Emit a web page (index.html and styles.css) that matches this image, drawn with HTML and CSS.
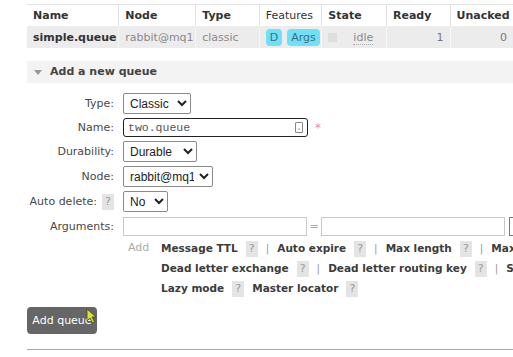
FILE: index.html
```
<!DOCTYPE html>
<html lang="en">
<head>
    <meta charset="UTF-8">
    <title>Queues</title>
    <link rel="stylesheet" href="styles.css">
</head>
<body>
    <div class="page">
        <table class="list">
            <thead>
                <tr>
                    <th class="c-name">Name</th>
                    <th class="c-node">Node</th>
                    <th class="c-type">Type</th>
                    <th class="c-feat plain">Features</th>
                    <th class="c-state">State</th>
                    <th class="c-num">Ready</th>
                    <th class="c-num">Unacked</th>
                    <th class="c-more"></th>
                </tr>
            </thead>
            <tbody>
                <tr>
                    <td class="qname">simple.queue</td>
                    <td class="dim">rabbit@mq1</td>
                    <td class="dim">classic</td>
                    <td><span class="tag">D</span><span class="tag">Args</span></td>
                    <td class="state"><span class="state-box"></span><span class="idle">idle</span></td>
                    <td class="num">1</td>
                    <td class="num">0</td>
                    <td></td>
                </tr>
            </tbody>
        </table>

        <div class="section">
            <h2 class="section-head"><span class="arrow"></span>Add a new queue</h2>

            <div class="form">
                <label class="lbl">Type:</label>
                <div><select class="sel sel-type"><option>Classic</option></select></div>

                <label class="lbl">Name:</label>
                <div class="row"><span class="name-input"><span class="mono">two.queue</span><span class="kbd-icon"></span></span><span class="req">*</span></div>

                <label class="lbl">Durability:</label>
                <div><select class="sel sel-dur"><option>Durable</option></select></div>

                <label class="lbl">Node:</label>
                <div><select class="sel sel-node"><option>rabbit@mq1</option></select></div>

                <label class="lbl">Auto delete: <span class="help">?</span></label>
                <div><select class="sel sel-no"><option>No</option></select></div>

                <label class="lbl">Arguments:</label>
                <div class="row args">
                    <span class="arg-box"></span>
                    <span class="eq">=</span>
                    <span class="arg-box"></span>
                    <span class="arg-box arg-cut"></span>
                </div>

                <span></span>
                <div class="adds">
                    <span class="add-word">Add</span>
                    <div class="links">
                        <div><b>Message TTL</b><span class="help">?</span><span class="pipe">|</span><b>Auto expire</b><span class="help">?</span><span class="pipe">|</span><b>Max length</b><span class="help">?</span><span class="pipe">|</span><b>Max length bytes</b></div>
                        <div><b>Dead letter exchange</b><span class="help">?</span><span class="pipe">|</span><b>Dead letter routing key</b><span class="help">?</span><span class="pipe">|</span><b>Single active consumer</b></div>
                        <div><b>Lazy mode</b><span class="help">?</span><b>Master locator</b><span class="help">?</span></div>
                    </div>
                </div>
            </div>

            <div class="actions">
                <button class="btn">Add queue</button>
                <svg class="cursor" width="12" height="16" viewBox="0 0 12 16"><path d="M1 1 L1 13 L4 10 L6.5 15 L8.5 14 L6 9 L10 9 Z" fill="#d8e23a" stroke="#4a4a10" stroke-width="0.8"/></svg>
            </div>
        </div>

        <hr class="rule">
    </div>
</body>
</html>
```

FILE: styles.css
```
body {
    margin: 0;
    font-family: "DejaVu Sans", Verdana, sans-serif;
    font-size: 11px;
    color: #484848;
    background: #fff;
    overflow: hidden;
}

.page {
    padding: 4px 0 0 27px;
    width: 540px;
}

/* queue list */

.list {
    border-collapse: collapse;
    table-layout: fixed;
    width: 520px;
}

.list th,
.list td {
    height: 21px;
    padding: 0 6px;
    text-align: left;
    white-space: nowrap;
    overflow: hidden;
    font-size: 11px;
}

.list th {
    color: #333;
    font-weight: bold;
    border-top: 1px solid #e2e2e2;
    border-left: 1px solid #e2e2e2;
    background: #fff;
}

.list th:first-child {
    border-left: none;
}

.list th.plain {
    font-weight: normal;
}

.list td {
    background: #ececec;
    border-left: 1px solid #f6f6f6;
    height: 22px;
}

.list td:first-child {
    border-left: none;
}

.c-name { width: 77px; }
.c-node { width: 62px; }
.c-type { width: 49px; }
.c-feat { width: 48px; }
.c-state { width: 50px; }
.c-num { width: 49px; }
.c-more { width: 20px; }

.qname {
    font-weight: bold;
    color: #333;
}

.dim {
    color: #8a8a8a;
}

.tag {
    display: inline-block;
    background: #6fe0f6;
    color: #3d6f80;
    border-radius: 4px;
    padding: 1px 4px;
    margin-right: 5px;
    line-height: 15px;
}

.state-box {
    display: inline-block;
    width: 9px;
    height: 9px;
    background: #dedede;
    vertical-align: middle;
    margin-right: 16px;
}

.idle {
    color: #8a8a8a;
    border-bottom: 1px dotted #aaa;
}

.list td.num {
    text-align: right;
    color: #777;
}

/* add queue section */

.section {
    margin-top: 13px;
}

.section-head {
    margin: 0;
    height: 22px;
    line-height: 22px;
    background: #f3f3f3;
    font-size: 11px;
    color: #444;
    padding-left: 7px;
    display: flex;
    align-items: center;
}

.arrow {
    width: 0;
    height: 0;
    border-left: 4px solid transparent;
    border-right: 4px solid transparent;
    border-top: 5px solid #999;
    margin-right: 8px;
}

.form {
    display: grid;
    grid-template-columns: 87px 1fr;
    column-gap: 9px;
    row-gap: 4px;
    align-items: center;
    margin-top: 10px;
}

.lbl {
    font-size: 11px;
    color: #484848;
    white-space: nowrap;
    display: flex;
    justify-content: flex-end;
    align-items: center;
    gap: 5px;
}

.sel {
    height: 21px;
    font-family: "Liberation Sans", Arial, sans-serif;
    font-size: 12px;
    color: #222;
    border: 1px solid #8a8a8a;
    border-radius: 2px;
    background: #fff;
    padding: 0 2px;
}

.sel-type { width: 68px; }
.sel-dur { width: 74px; }
.sel-node { width: 90px; }
.sel-no { width: 45px; }

.row {
    display: flex;
    align-items: center;
}

.name-input {
    width: 175px;
    height: 17px;
    border: 1.5px solid #222;
    border-radius: 3px;
    display: flex;
    align-items: center;
    justify-content: space-between;
    padding: 0 4px;
}

.mono {
    font-family: "Liberation Mono", "Courier New", monospace;
    font-size: 11.5px;
    color: #555;
}

.kbd-icon {
    width: 6px;
    height: 9px;
    border: 1px solid #888;
    border-radius: 1px;
    background: linear-gradient(#ccc, #ccc) center 5px / 2px 2px no-repeat;
}

.req {
    color: #f28a9a;
    margin-left: 7px;
    font-size: 12px;
}

.args {
    margin-top: 1px;
}

.arg-box {
    width: 182px;
    height: 17px;
    border: 1px solid #c8c8c8;
    flex: none;
}

.eq {
    color: #aaa;
    width: 14px;
    text-align: center;
    flex: none;
}

.arg-cut {
    margin-left: 4px;
    width: 20px;
    border-color: #777;
}

.help {
    display: inline-block;
    background: #e4e4e4;
    color: #999;
    font-weight: normal;
    width: 12px;
    height: 16px;
    line-height: 16px;
    text-align: center;
    font-size: 11px;
}

.adds {
    display: flex;
    align-items: flex-start;
    margin-top: -2px;
}

.add-word {
    color: #aaa;
    padding-left: 5px;
    width: 33px;
    flex: none;
    line-height: 20px;
}

.links {
    white-space: nowrap;
    font-size: 10.5px;
    color: #3c3c3c;
}

.links div {
    line-height: 20px;
}

.links .help {
    margin-left: 8px;
    margin-right: 8px;
    vertical-align: middle;
}

.pipe {
    color: #999;
    margin-right: 8px;
}

.actions {
    position: relative;
    margin-top: 9px;
}

.btn {
    background: #666;
    color: #fff;
    border: none;
    border-radius: 4px;
    font-family: "DejaVu Sans", Verdana, sans-serif;
    font-size: 11px;
    width: 70px;
    height: 27px;
    padding: 0;
}

.cursor {
    position: absolute;
    left: 59px;
    top: 1px;
}

.rule {
    border: none;
    border-top: 1px solid #aaa;
    margin: 15px 0 0;
}
```
